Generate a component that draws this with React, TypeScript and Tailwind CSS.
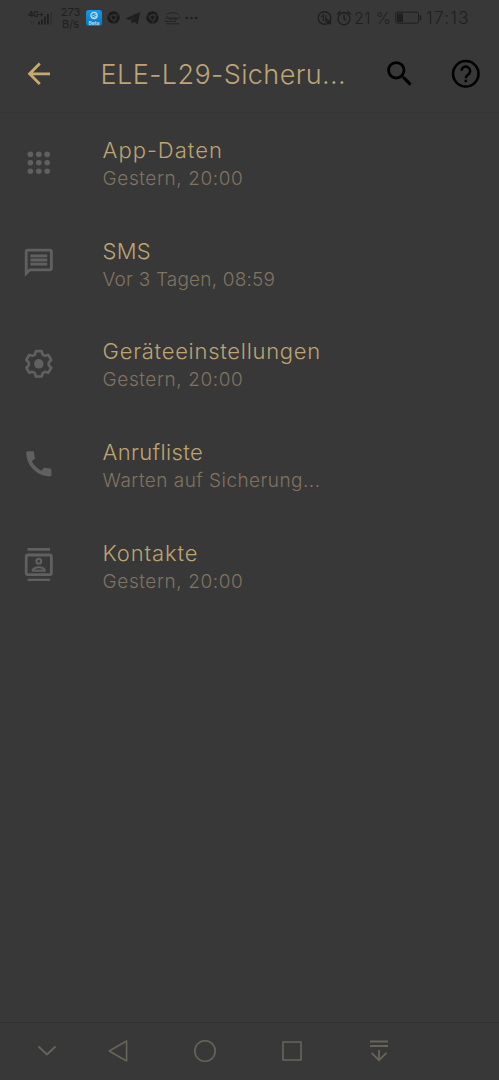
import type { ReactNode } from 'react';
import { MdArrowBack, MdCall, MdOutlineContacts, MdOutlineMessage, MdSearch } from 'react-icons/md';

interface BackupItem {
  title: string;
  subtitle: string;
  icon: ReactNode;
  titleClass: string;
  subtitleClass: string;
}

function DotsIcon() {
  return (
    <svg viewBox="0 0 24 24" className="size-[33.6px]" fill="currentColor">
      {[6, 12, 18].map((y) => [6, 12, 18].map((x) => <circle key={`${x}-${y}`} cx={x} cy={y} r="2" />))}
    </svg>
  );
}

function GearIcon() {
  return (
    <svg viewBox="-12 -12 24 24" className="size-[33.6px]" fill="none" stroke="currentColor" strokeWidth="1.9" strokeLinejoin="round">
      <path d="M-2.8-6.6-2-9.1H2L2.8-6.6 4.32-5.72 6.87-6.28 8.87-2.82 7.12-.88V.88L8.87 2.82 6.87 6.28 4.32 5.72 2.8 6.6 2 9.1H-2L-2.8 6.6-4.32 5.72-6.87 6.28-8.87 2.82-7.12.88V-.88L-8.87-2.82-6.87-6.28-4.32-5.72z" />
      <circle r="3.4" fill="currentColor" stroke="none" />
    </svg>
  );
}

function HelpIcon() {
  return (
    <svg viewBox="0 0 24 24" className="ml-[33px] size-[33.6px] text-black" fill="none" stroke="currentColor" strokeWidth="1.8">
      <circle cx="12" cy="12" r="9.1" />
      <path d="M8.9 9.9a3.1 3.1 0 1 1 5.5 2c-.9 1-2.4 1.6-2.4 3.2" />
      <path d="M11.1 16.2h1.8V18h-1.8z" fill="currentColor" stroke="none" />
    </svg>
  );
}

const items: BackupItem[] = [
  { title: 'App-Daten', subtitle: 'Gestern, 20:00', icon: <DotsIcon />, titleClass: 'tracking-[1px]', subtitleClass: 'tracking-[0.58px]' },
  { title: 'SMS', subtitle: 'Vor 3 Tagen, 08:59', icon: <MdOutlineMessage className="size-[33.6px]" />, titleClass: 'tracking-[0.2px]', subtitleClass: 'tracking-[0.2px]' },
  { title: 'Geräteeinstellungen', subtitle: 'Gestern, 20:00', icon: <GearIcon />, titleClass: 'tracking-[0.72px]', subtitleClass: 'tracking-[0.58px]' },
  { title: 'Anrufliste', subtitle: 'Warten auf Sicherung...', icon: <MdCall className="size-[33.6px]" />, titleClass: 'tracking-[0.35px]', subtitleClass: 'tracking-[0.45px]' },
  { title: 'Kontakte', subtitle: 'Gestern, 20:00', icon: <MdOutlineContacts className="size-[33.6px]" />, titleClass: 'tracking-[0.85px]', subtitleClass: 'tracking-[0.58px]' },
];

function ChromeIcon() {
  return (
    <svg viewBox="0 0 14 14" className="size-[13px]">
      <circle cx="7" cy="7" r="6.7" fill="#1b1b1b" />
      <circle cx="7" cy="7" r="2.9" fill="#1b1b1b" stroke="#444" strokeWidth="0.9" />
      <path d="M7 4.1h6M4.5 8.5 1.6 3.5M9.5 8.5l-2.9 5" stroke="#383838" strokeWidth="0.8" />
    </svg>
  );
}

function StatusBar() {
  return (
    <div className="flex h-9 shrink-0 items-center pb-px pl-7 text-[#1f1f1f]">
      <div className="flex h-4 w-[26px] flex-col">
        <span className="h-[7px] text-[8px] leading-[8px] font-bold tracking-tighter">4G+</span>
        <svg viewBox="0 0 26 9" className="-mt-[3px] h-3 w-[26px] overflow-visible" fill="currentColor">
          <path d="M10 6h1.8v3H10zM13 4h1.8v5H13zM16 1h1.8v8H16zM19 -1.5h1.8V9H19z" />
          <path d="M22.5-3h1.4V9h-1.4zM3 6h1.2v2H3zM5 6h1.2v2H5z" opacity=".35" />
        </svg>
      </div>
      <div className="ml-[5px] flex w-[23px] flex-col items-center text-[11px] leading-[12px]">
        <span>273</span>
        <span>B/s</span>
      </div>
      <div className="ml-[4px] flex h-4 w-4 flex-col items-center justify-end rounded-[3px] bg-linear-to-b from-[#159be9] to-[#0876bb] text-[#c2dceb]">
        <svg viewBox="0 0 12 9" className="h-[9px] w-3" fill="none" stroke="currentColor">
          <circle cx="6" cy="4.5" r="3.1" strokeWidth="1.3" />
          <path d="M3.5 5.5 8.5 3M5 6.7l3-1.5" strokeWidth="0.8" />
        </svg>
        <span className="text-[5px] leading-[6px] font-bold">Beta</span>
      </div>
      <div className="ml-[5px] flex items-center">
        <ChromeIcon />
        <svg viewBox="0 0 16 14" className="ml-[5px] h-[14px] w-4" fill="currentColor">
          <path d="M.5 7.5 15.2 1 12.8 13.4 8.9 10.7 6.8 12.8 6 9 11 5.2 4.6 9z" />
        </svg>
        <span className="ml-[5px]"><ChromeIcon /></span>
        <svg viewBox="0 0 18 14" className="ml-[4px] h-[14px] w-[18px]" fill="none" stroke="currentColor" strokeWidth="0.8">
          <path d="M3 4C6 1 14 1 16 4M1 10.5h12M3 12.8h13" />
          <path d="M3.5 8.5C1.5 7 5 4.5 5 6.5c0 1.5 1.5 2.5 2 0 0 2.5 1.5 2.5 2 0 0 2.5 1.5 2.5 2 0 0 2.5 1.5 2 2 0l-.5 3M13 7c1 1.5 2.5 1 3.5-1.5" />
        </svg>
        <svg viewBox="0 0 14 4" className="ml-[4px] h-1 w-[13px]" fill="currentColor">
          <circle cx="2" cy="2" r="1.4" />
          <circle cx="7" cy="2" r="1.4" />
          <circle cx="12" cy="2" r="1.4" />
        </svg>
      </div>
      <div className="mr-[25px] ml-auto flex items-center">
        <svg viewBox="0 0 16 16" className="size-4" fill="none" stroke="currentColor" strokeWidth="1.4">
          <circle cx="7.5" cy="8" r="6.3" />
          <path d="M6.4 11V5L4.2 7M8.8 5v6l2-2" strokeWidth="1.2" />
          <circle cx="12" cy="12.2" r="2.3" fill="currentColor" stroke="none" />
        </svg>
        <svg viewBox="0 0 16 16" className="ml-[3px] size-4" fill="none" stroke="currentColor" strokeWidth="1.4">
          <circle cx="8" cy="8.7" r="6" />
          <path d="M8 5v3.8l2.4 1.6M1.3 4.2 4.5 1.5M14.7 4.2 11.5 1.5" />
        </svg>
        <span className="ml-[2px] w-[39px] text-[16px] leading-4 font-light tracking-[0.4px] whitespace-nowrap">21 %</span>
        <svg viewBox="0 0 27 14" className="ml-[2px] h-[14px] w-[27px]" fill="none" stroke="currentColor">
          <rect x="0.7" y="1.2" width="22.8" height="11" rx="1.5" strokeWidth="1" />
          <path d="M2 2.5h6v8.5H2zM24.7 4.2h1.5v5h-1.5z" fill="currentColor" stroke="none" />
        </svg>
        <span className="ml-1 w-[48px] text-[17px] leading-4 font-light tracking-[1.3px]">17:13</span>
      </div>
    </div>
  );
}

function Header() {
  return (
    <header className="flex h-[77px] shrink-0 items-center border-b border-[#343434] pb-px pl-[22px]">
      <MdArrowBack className="size-[33.6px] text-[#c8aa70]" />
      <h1 className="ml-[45px] w-[279px] pt-0.5 text-[27px] leading-8 font-light tracking-[0.4px] whitespace-nowrap text-[#bda477]">
        ELE-L29-Sicheru...
      </h1>
      <MdSearch className="ml-[3px] size-[33.6px] text-black" />
      <HelpIcon />
    </header>
  );
}

function NavigationBar() {
  return (
    <nav className="flex h-[58px] shrink-0 items-center border-t border-[#303030] pb-0.5 pl-[37px] text-[#68645a]">
      <svg viewBox="0 0 20 24" className="h-6 w-5" fill="none" stroke="currentColor" strokeWidth="1.8">
        <path d="m1.5 7.5 8.5 8 8.5-8" />
      </svg>
      <svg viewBox="0 0 22 24" className="ml-[51px] h-6 w-[22px]" fill="none" stroke="currentColor" strokeWidth="1.6" strokeLinejoin="round">
        <path d="M18.6 2v20L1.2 12z" />
      </svg>
      <svg viewBox="0 0 24 24" className="ml-[63px] size-6" fill="none" stroke="currentColor" strokeWidth="1.6">
        <circle cx="12" cy="12" r="10.2" />
      </svg>
      <svg viewBox="0 0 24 24" className="ml-[63px] size-6" fill="none" stroke="currentColor" strokeWidth="1.6" strokeLinejoin="round">
        <path d="M3 3h18v18H3z" />
      </svg>
      <svg viewBox="0 0 20 24" className="ml-[65px] h-6 w-5" fill="none" stroke="currentColor" strokeWidth="1.8">
        <path d="M1 2.5h18M1 7h18M10 11v10M2.5 13.8l7.5 7.4 7.5-7.4" />
      </svg>
    </nav>
  );
}

function App() {
  return (
    <div className="flex h-screen w-full flex-col overflow-hidden bg-[#383838] font-['Inter','Liberation_Sans',sans-serif]">
      <StatusBar />
      <Header />
      <main className="-mt-px flex-1">
        {items.map((item) => (
          <div key={item.title} className="flex h-[100.6px] items-center pl-[22px] text-[#606060]">
            {item.icon}
            <div className="ml-[47px] flex flex-col pt-[5px] font-light whitespace-nowrap">
              <span className={`text-[22px] leading-7 text-[#bda470] ${item.titleClass}`}>{item.title}</span>
              <span className={`text-[19px] leading-[29px] text-[#807360] ${item.subtitleClass}`}>{item.subtitle}</span>
            </div>
          </div>
        ))}
      </main>
      <NavigationBar />
    </div>
  );
}

export default App;
